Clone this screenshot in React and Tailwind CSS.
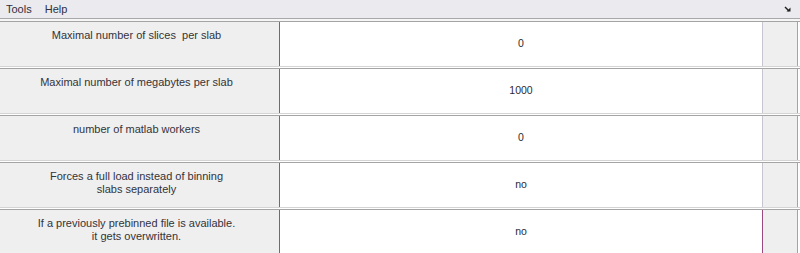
const ROWS = [
  { label: ["Maximal number of slices  per slab"], value: "0" },
  { label: ["Maximal number of megabytes per slab"], value: "1000" },
  { label: ["number of matlab workers"], value: "0" },
  { label: ["Forces a full load instead of binning", "slabs separately"], value: "no" },
  { label: ["If a previously prebinned file is available.", "it gets overwritten."], value: "no", focus: true },
];

function UndockIcon() {
  return (
    <svg width="9" height="9" viewBox="0 0 9 9" className="block">
      <path d="M1 2 L5 6" stroke="#202020" strokeWidth="1.4" />
      <path d="M2.5 6.5 H6.5 V2.5 Z" fill="#202020" />
    </svg>
  );
}

function ParamRow({ label, value, focus }) {
  return (
    <div className="flex border-t border-b border-t-[#a4a4a4] border-b-[#d4d4d4] mb-[1px] bg-white">
      <div className="w-[280px] h-[44px] shrink-0 bg-[#efefef] border-r border-[#6c6c76] pr-[6px] pt-[7px] text-center text-[11px] leading-[13px] text-[#33333a]">
        {label.map((line) => (
          <div key={line} className="whitespace-pre">
            {line}
          </div>
        ))}
      </div>
      <div className="flex-1 h-[44px] flex items-center justify-center bg-white text-[10.5px] text-[#2a2a30]">
        {value}
      </div>
      <div
        className={`w-[36px] h-[44px] shrink-0 bg-[#efefef] border-l border-r border-r-[#a4a4a4] mr-[2px] ${
          focus ? "border-l-[#9a4a7e]" : "border-l-[#c6c6d0]"
        }`}
      />
    </div>
  );
}

export default function App() {
  return (
    <div
      className="w-[800px] h-[253px] overflow-hidden bg-white"
      style={{ fontFamily: '"Liberation Sans", Arial, sans-serif' }}
    >
      <div className="h-[19px] bg-[#eaeaef] border-b border-[#a8a8a8] flex items-center px-[6px] text-[11px] text-[#303040]">
        <span>Tools</span>
        <span className="ml-[13px]">Help</span>
        <div className="ml-auto mr-[1px]">
          <UndockIcon />
        </div>
      </div>
      <div className="h-[2px] bg-[#f6f6f6]" />
      {ROWS.map((row) => (
        <ParamRow key={row.label[0]} {...row} />
      ))}
    </div>
  );
}
